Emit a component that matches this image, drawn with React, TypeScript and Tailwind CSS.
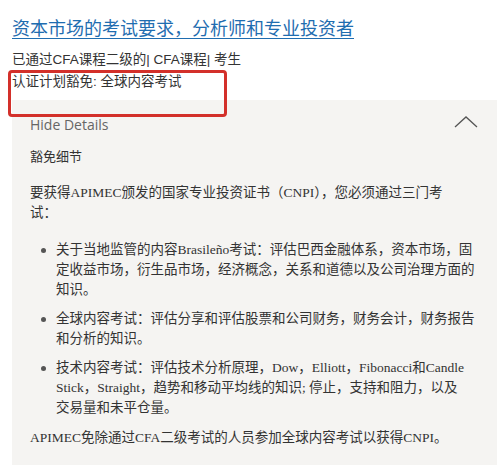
export default function App() {
  const body = 'font-["Liberation_Serif","Noto_Sans_CJK_SC",serif]';
  const items: [string, string?][] = [
    ['关于当地监管的内容Brasileño考试：评估巴西金融体系，资本市场，固定收益市场，衍生品市场，经济概念，关系和道德以及公司治理方面的知识。'],
    ['全球内容考试：评估分享和评估股票和公司财务，财务会计，财务报告和分析的知识。'],
    ['技术内容考试：评估技术分析原理，Dow，Elliott，Fibonacci和Candle Stick，Straight，趋势和移动平均线的知识; 停止，支持和阻力，以及', '交易量和未平仓量。'],
  ];
  return (
    <div className="min-h-screen bg-white pl-3 pt-[15px] text-[#333] overflow-hidden">
      <a
        href="#"
        className='block text-[18px] leading-[24px] text-[#1f6db0] underline underline-offset-[3px] font-["Noto_Sans_CJK_SC",sans-serif]'
      >
        资本市场的考试要求，分析师和专业投资者
      </a>
      <div className='mt-[10px] text-[13.5px] leading-[22px] font-["Liberation_Sans","Noto_Sans_CJK_SC",sans-serif]'>
        已通过CFA课程二级的| CFA课程| 考生
      </div>
      <div className="relative">
        <div className='text-[13.5px] leading-[22px] font-["Liberation_Sans","Noto_Sans_CJK_SC",sans-serif]'>
          认证计划豁免: 全球内容考试
        </div>
        <div className="absolute left-[-4px] top-[-1px] w-[219px] h-[47px] border-[3px] border-[#d3302a] rounded-[4px] z-10" />
      </div>
      <div className="mt-[7px] bg-[#f5f4f2] pl-[18px] pr-[21px] pt-[15px] pb-8">
        <div className="flex items-center justify-between">
          <span className='text-[14px] leading-[20px] text-[#666] font-["Open_Sans",sans-serif]'>Hide Details</span>
          <svg width="24" height="12" viewBox="0 0 24 12" className="-mt-[6px] -mr-[2px]">
            <path d="M1 11 L12 1 L23 11" fill="none" stroke="#555" strokeWidth="1.3" />
          </svg>
        </div>
        <div className={`mt-[12px] text-[13px] leading-[20px] ${body}`}>豁免细节</div>
        <p className={`mt-[16px] w-[430px] text-[13.5px] leading-[20px] ${body}`}>
          要获得APIMEC颁发的国家专业投资证书（CNPI），您必须通过三门考试：
        </p>
        <ul className={`mt-[17px] flex flex-col gap-[9px] text-[13.5px] leading-[20px] ${body}`}>
          {items.map(([t, tail]) => (
            <li key={t} className="flex">
              <span className="mt-[8px] ml-[11px] mr-[10px] w-[5px] h-[5px] shrink-0 rounded-full bg-[#555]" />
              <span>
                {t}
                {tail && <span className="whitespace-nowrap">{tail}</span>}
              </span>
            </li>
          ))}
        </ul>
        <p className={`mt-[10px] text-[13.5px] leading-[20px] ${body}`}>
          APIMEC免除通过CFA二级考试的人员参加全球内容考试以获得CNPI。
        </p>
      </div>
    </div>
  );
}
